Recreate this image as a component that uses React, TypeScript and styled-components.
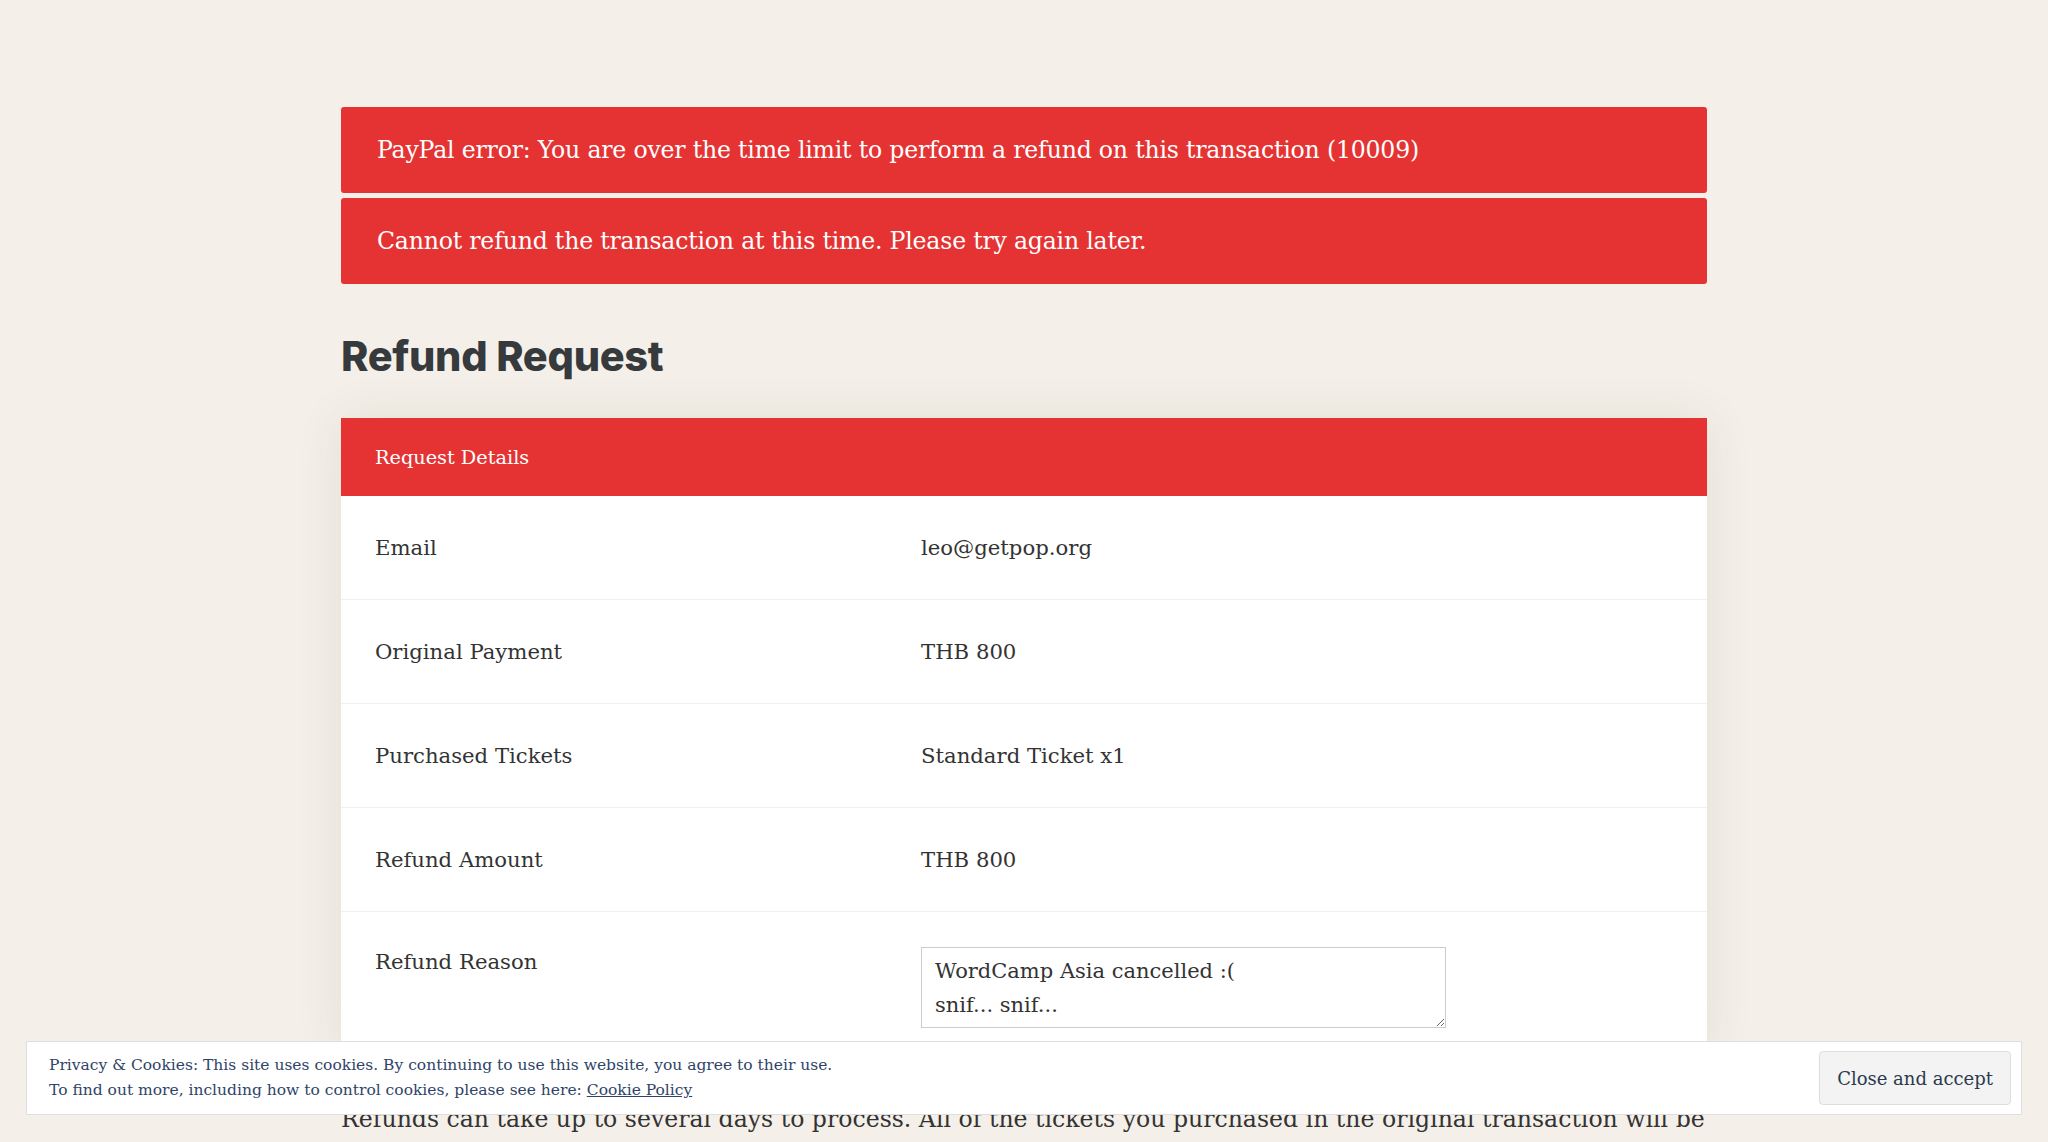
import React from 'react';
import styled, { createGlobalStyle } from 'styled-components';

const RED = '#e53333';
const INK = '#333333';
const NAVY = '#2f4468';
const BODY_FONT = '"DejaVu Serif", "Liberation Serif", serif';

const GlobalStyle = createGlobalStyle`
  html, body {
    margin: 0;
    padding: 0;
    background: #f4f0e9;
    font-family: ${BODY_FONT};
    color: ${INK};
  }
`;

type RowType = {
  label: string,
  value: string
};

const details: RowType[] = [
  { label: 'Email', value: 'leo@getpop.org' },
  { label: 'Original Payment', value: 'THB 800' },
  { label: 'Purchased Tickets', value: 'Standard Ticket x1' },
  { label: 'Refund Amount', value: 'THB 800' },
];

const errors = [
  'PayPal error: You are over the time limit to perform a refund on this transaction (10009)',
  'Cannot refund the transaction at this time. Please try again later.',
];

export default function App() {
  return (
    <>
      <GlobalStyle />
      <Page>
        <Notices>
          {errors.map((msg) => (
            <ErrorBox key={msg}>{msg}</ErrorBox>
          ))}
        </Notices>

        <Title>Refund Request</Title>

        <Card>
          <CardHeader>Request Details</CardHeader>
          {details.map((row) => (
            <Row key={row.label}>
              <Label>{row.label}</Label>
              <Value>{row.value}</Value>
            </Row>
          ))}
          <Row tall>
            <Label>Refund Reason</Label>
            <Value>
              <Reason defaultValue={'WordCamp Asia cancelled :(\nsnif... snif...'} />
            </Value>
          </Row>
        </Card>

        <Note>
          Refunds can take up to several days to process. All of the tickets you purchased in the original transaction will be
          cancelled.
        </Note>
      </Page>

      <CookieBar>
        <CookieText>
          Privacy &amp; Cookies: This site uses cookies. By continuing to use this website, you agree to their use.
          <br />
          To find out more, including how to control cookies, please see here: <CookieLink href="#">Cookie Policy</CookieLink>
        </CookieText>
        <AcceptButton type="button">Close and accept</AcceptButton>
      </CookieBar>
    </>
  );
}

const Page = styled.div`
  width: 1366px;
  margin: 0 auto;
  padding: 107px 0 120px;
`;

const Notices = styled.div`
  display: flex;
  flex-direction: column;
  gap: 5px;
`;

const ErrorBox = styled.div`
  display: flex;
  align-items: center;
  height: 86px;
  padding: 0 36px;
  background: ${RED};
  border-radius: 3px;
  color: #ffffff;
  font-size: 23.6px;
  letter-spacing: -0.2px;
`;

const Title = styled.h1`
  margin: 46px 0 0;
  height: 52px;
  line-height: 52px;
  font-family: Inter, "Noto Sans", sans-serif;
  font-size: 41.5px;
  font-weight: 800;
  letter-spacing: -0.3px;
  color: #363a3d;
`;

const Card = styled.div`
  margin-top: 36px;
  background: #ffffff;
  box-shadow: 0 0 45px rgba(60, 40, 10, 0.09);
`;

const CardHeader = styled.div`
  display: flex;
  align-items: center;
  height: 78px;
  padding: 0 34px;
  background: ${RED};
  color: #ffffff;
  font-size: 19.3px;
`;

const Row = styled.div<{ tall?: boolean }>`
  display: grid;
  grid-template-columns: 580px 1fr;
  align-items: ${(props) => (props.tall ? 'start' : 'center')};
  height: ${(props) => (props.tall ? '142px' : '104px')};
  padding: ${(props) => (props.tall ? '35px 0 0' : '0')};
  box-sizing: border-box;
  border-bottom: ${(props) => (props.tall ? 'none' : '1px solid #efefef')};
  font-size: 21.2px;
  line-height: 30px;
`;

const Label = styled.div`
  padding-left: 34px;
  color: ${INK};
`;

const Value = styled.div`
  color: ${INK};
`;

const Reason = styled.textarea`
  display: block;
  width: 525px;
  height: 81px;
  box-sizing: border-box;
  padding: 6px 13px;
  border: 1px solid #cccccc;
  border-radius: 0;
  font-family: ${BODY_FONT};
  font-size: 21px;
  line-height: 34px;
  color: ${INK};
  background: #ffffff;
  overflow: hidden;
`;

const Note = styled.p`
  margin: 45px 0 0;
  font-size: 23.6px;
  line-height: 40px;
  color: ${INK};
`;

const CookieBar = styled.div`
  position: fixed;
  left: 26px;
  right: 26px;
  bottom: 27px;
  height: 74px;
  box-sizing: border-box;
  display: flex;
  align-items: center;
  justify-content: space-between;
  padding: 0 10px 0 22px;
  background: #ffffff;
  border: 1px solid #dedede;
  z-index: 10;
`;

const CookieText = styled.div`
  font-size: 15.5px;
  line-height: 25px;
  color: ${NAVY};
`;

const CookieLink = styled.a`
  color: ${NAVY};
  text-decoration: underline;
`;

const AcceptButton = styled.button`
  height: 54px;
  padding: 0 17px;
  background: #f3f3f3;
  border: 1px solid #dddddd;
  border-radius: 4px;
  font-family: ${BODY_FONT};
  font-size: 18px;
  color: #2b3a4d;
  cursor: pointer;
`;
